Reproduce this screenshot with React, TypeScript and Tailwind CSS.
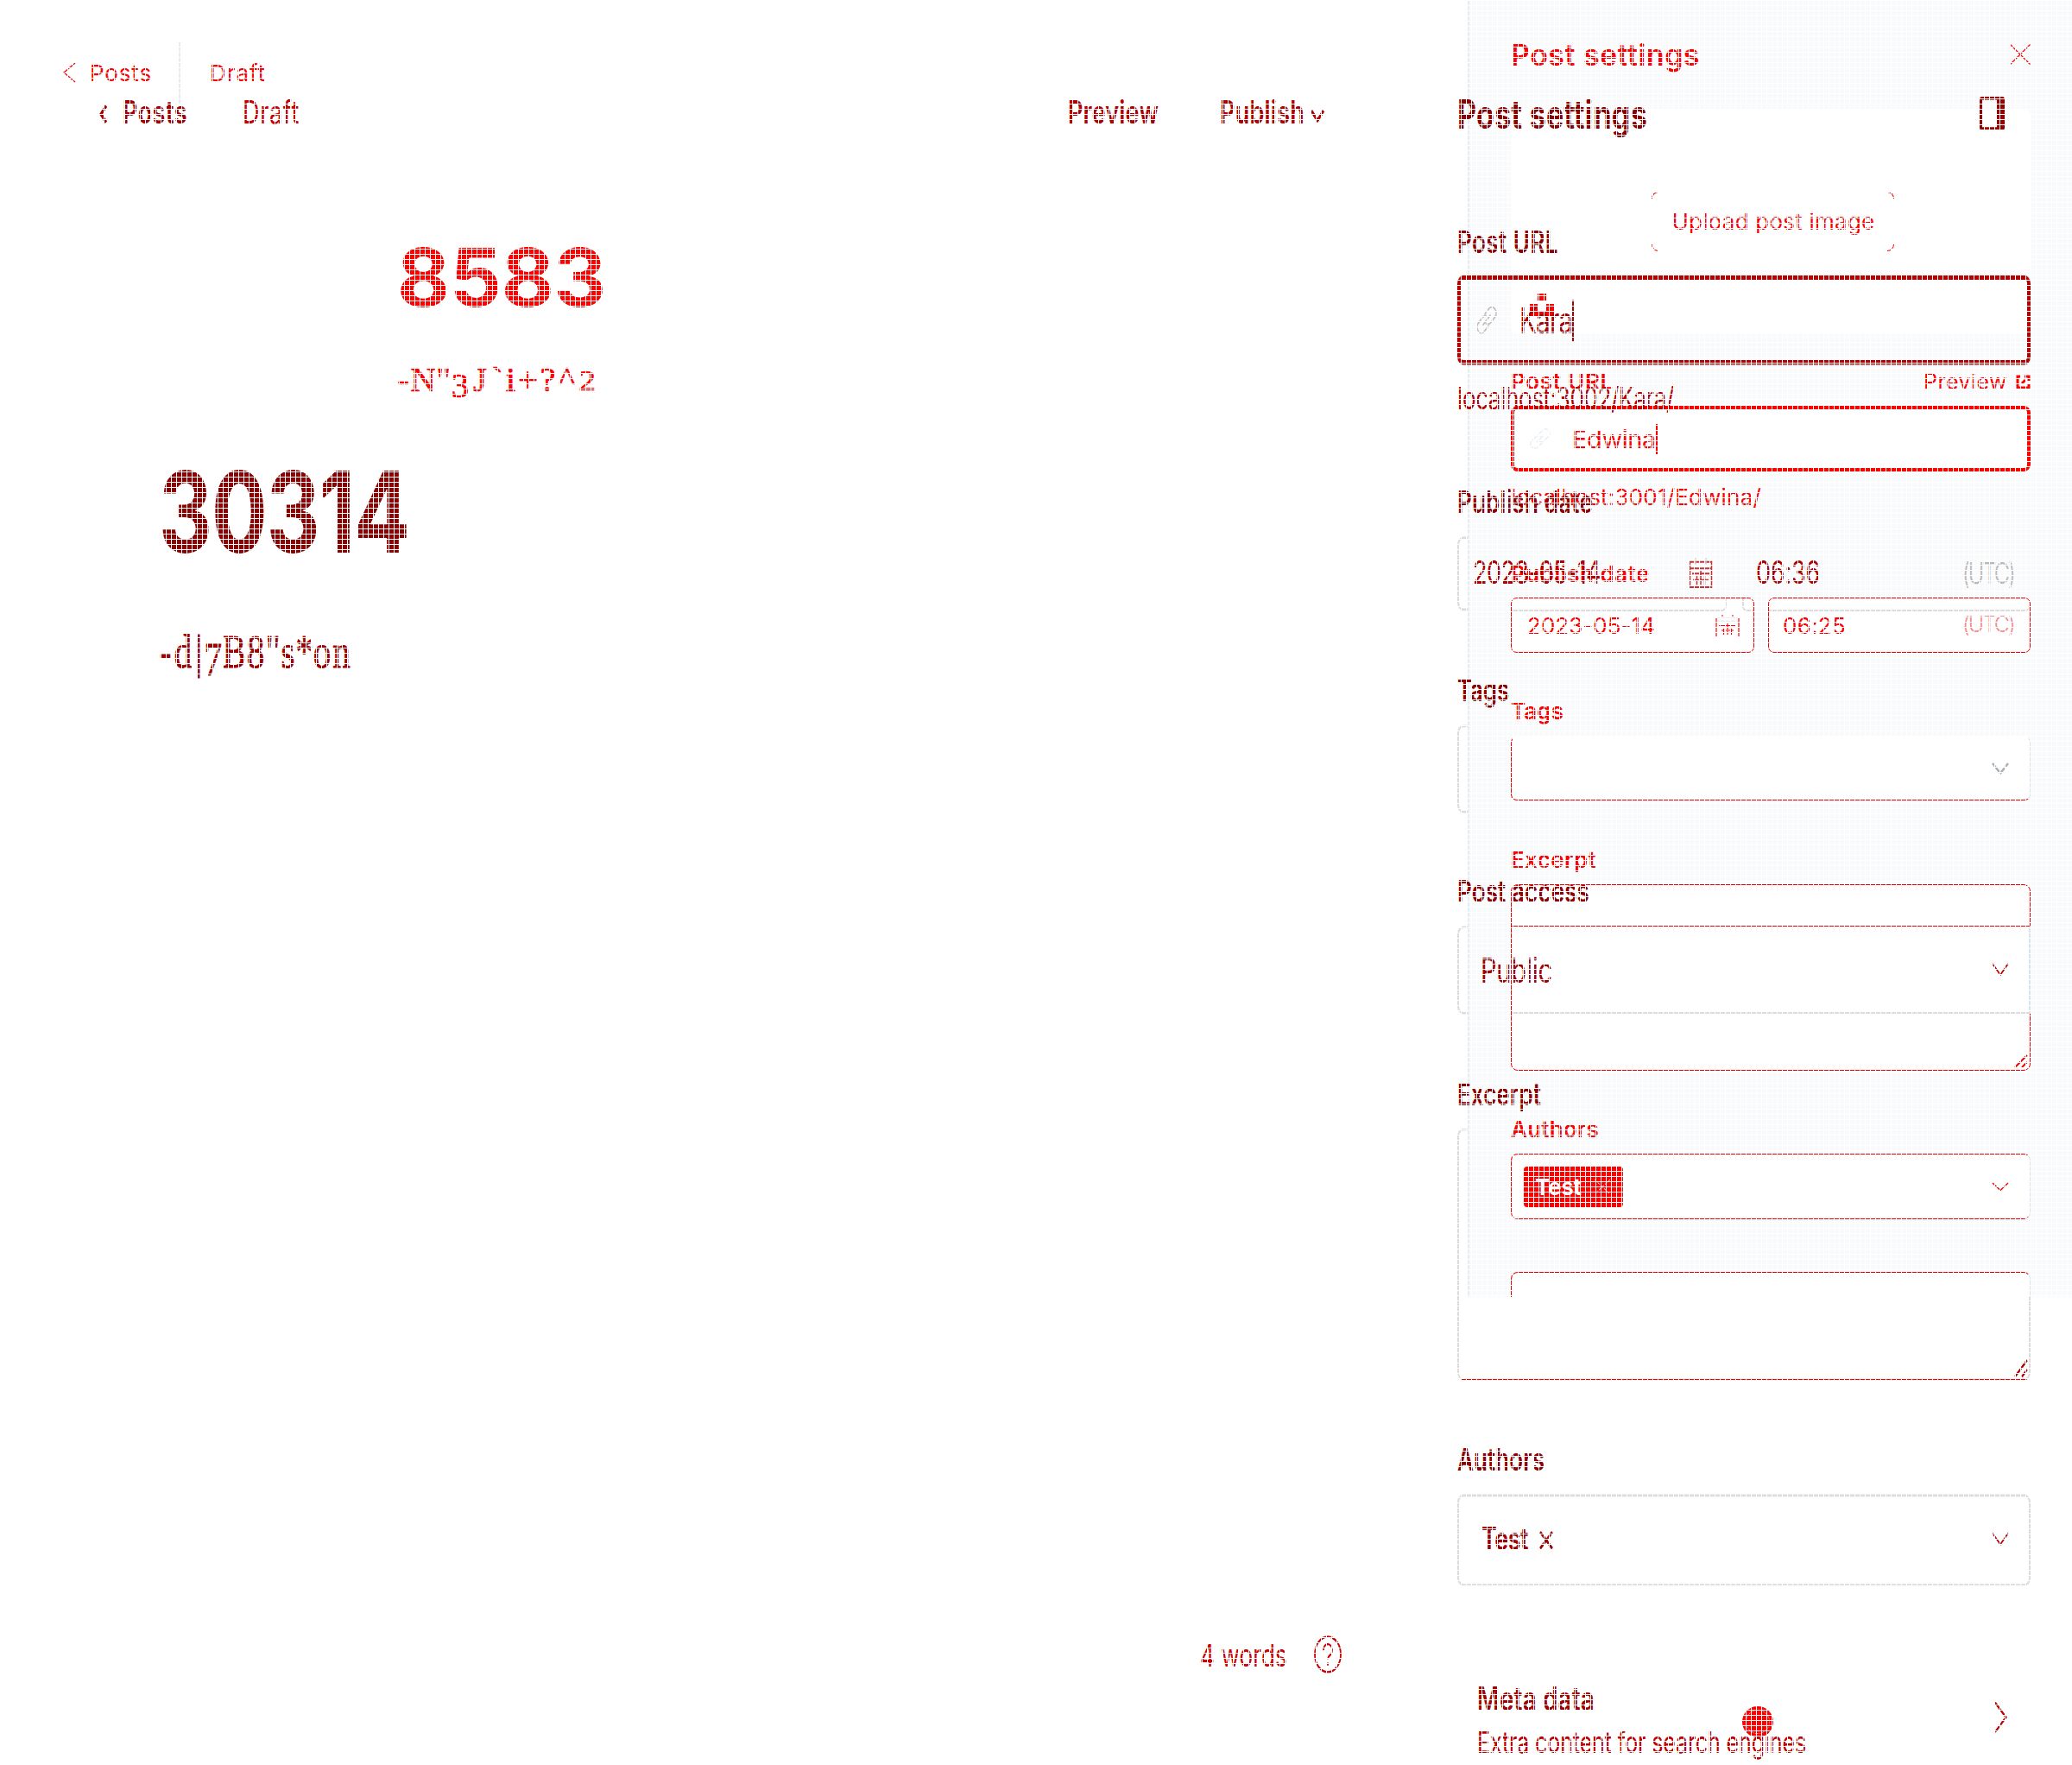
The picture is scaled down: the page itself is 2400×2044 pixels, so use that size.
import { useLayoutEffect, useRef, type ReactNode } from "react";

type FitProps = { text: string; w: number; className: string };

/** A single line of text whose tracking is spread so that it fills `w` pixels. */
function Fit({ text, w, className }: FitProps) {
  const ref = useRef<HTMLSpanElement>(null);
  useLayoutEffect(() => {
    const el = ref.current;
    if (!el) return;
    el.style.letterSpacing = "0px";
    const natural = el.getBoundingClientRect().width;
    el.style.letterSpacing = `${(w - natural) / text.length}px`;
  }, [text, w]);
  return (
    <span ref={ref} className={`inline-block shrink-0 whitespace-pre ${className}`}>
      {text}
    </span>
  );
}

type Glyph = { c: string; w: number; low?: boolean; small?: boolean };

/** Serif text with old-style figures: low digits hang below the baseline. */
function SerifLine({ glyphs, className }: { glyphs: Glyph[]; className: string }) {
  return (
    <div className={`flex h-[60px] leading-[60px] text-[41px] font-['Liberation_Serif',serif] [-webkit-text-stroke:0.7px_currentColor] ${className}`}>
      {glyphs.map((g, i) => (
        <span key={i} className="flex justify-center" style={{ width: g.w }}>
          <span className={g.low ? "relative top-[7px]" : g.small ? "relative top-[2px] scale-x-[1.2] text-[33px]" : ""}>{g.c}</span>
        </span>
      ))}
    </div>
  );
}

const lineA: Glyph[] = [
  { c: "-", w: 16 }, { c: "N", w: 30 }, { c: '"', w: 17 }, { c: "3", w: 22, low: true }, { c: "J", w: 24 },
  { c: "`", w: 16 }, { c: "i", w: 15 }, { c: "+", w: 25 }, { c: "?", w: 21 }, { c: "^", w: 23 }, { c: "2", w: 24, small: true },
];

const lineB: Glyph[] = [
  { c: "-", w: 15 }, { c: "d", w: 26 }, { c: "|", w: 10 }, { c: "7", w: 23.5, low: true }, { c: "B", w: 25.5 },
  { c: "8", w: 24 }, { c: '"', w: 16 }, { c: "s", w: 19 }, { c: "*", w: 19 }, { c: "o", w: 22 }, { c: "n", w: 23 },
];

function Chevron({ className, w = 20, h = 12, sw = 1.5 }: { className: string; w?: number; h?: number; sw?: number }) {
  return (
    <svg width={w} height={h} viewBox={`0 0 ${w} ${h}`} className={`shrink-0 ${className}`} fill="none" stroke="currentColor" strokeWidth={sw}>
      <path d={`M1 1L${w / 2} ${h - 1.5}L${w - 1} 1`} />
    </svg>
  );
}

function LinkIcon({ className }: { className: string }) {
  return (
    <svg width="26" height="26" viewBox="0 0 26 26" className={`shrink-0 ${className}`} fill="none" stroke="currentColor" strokeWidth="1.5" strokeLinecap="round">
      <path d="M9 17L17 9" />
      <path d="M11 8L16 3a5 5 0 0 1 7 7l-5 5a5 5 0 0 1-6 .8" />
      <path d="M15 18l-5 5a5 5 0 0 1-7-7l5-5a5 5 0 0 1 6-.8" />
    </svg>
  );
}

function CalendarIcon({ className }: { className: string }) {
  return (
    <svg width="28" height="26" viewBox="0 0 28 26" className={`shrink-0 ${className}`} fill="none" stroke="currentColor" strokeWidth="1.5">
      <path d="M1.5 3.500h25v21.500h-25z M1.5 9h25" />
      <path d="M8 0.500v5M20 0.500v5" stroke="#c8c8c8" />
      <path d="M4 13.500h20M5 19h18M9.500 15v8M14 11v12M18.500 15v8" />
    </svg>
  );
}

/** Faint calendar: only its sides and a few grid strokes are strong. */
function CalendarTrace({ className }: { className: string }) {
  return (
    <svg width="28" height="26" viewBox="0 0 28 26" className={`shrink-0 ${className}`} fill="none" stroke="currentColor" strokeWidth="1.2">
      <path d="M2 4h24M2 8.500h24" stroke="#ececec" strokeWidth="2" />
      <path d="M1 5v21M27 5v21" />
      <path d="M7 2h2M19 2h2M4 13.500h20M9.500 17v7M14 11v13M18.500 17v7" />
      <path d="M7 19h14" strokeDasharray="2 2" />
    </svg>
  );
}

function Grip({ className }: { className: string }) {
  return (
    <svg width="16" height="16" viewBox="0 0 16 16" className={`shrink-0 ${className}`} stroke="currentColor" strokeWidth="2">
      <path d="M1 15L15 1M9 15L15 9" />
    </svg>
  );
}

function LabelRow({ children, className }: { children: ReactNode; className: string }) {
  return <div className={`flex shrink-0 items-center justify-between ${className}`}>{children}</div>;
}

const labelA = "text-[26px] font-semibold text-[#ff0000]";
const labelB = "text-[26px] font-semibold text-[#900000]";

/** Outlines of the taller panel's fields, partly covered by the shorter panel. */
function FieldFrames() {
  return (
    <div className="col-start-1 row-start-1 flex h-[1500px] w-[2400px] origin-top scale-y-[1.36267] flex-col pl-[1688px] pt-[455.5px]">
      <div className="h-[63px] w-[312px] shrink-0 rounded-[7px] border-2 border-[#dcdcdc]" />
      <div className="mt-[97px] h-[75px] w-[664px] shrink-0 rounded-[7px] border-2 border-[#dcdcdc]" />
      <div className="mt-[96px] h-[75px] w-[664px] shrink-0 rounded-[7px] border-2 border-[#dcdcdc]" />
      <div className="mt-[97px] flex h-[214px] w-[664px] shrink-0 items-end justify-end rounded-[7px] border-2 border-b-1 border-[#dcdcdc] border-b-[#f00000] pr-px pb-px">
        <Grip className="text-[#b00000]" />
      </div>
      <div className="mt-[97px] h-[78px] w-[664px] shrink-0 rounded-[7px] border-2 border-[#dcdcdc]" />
    </div>
  );
}

function EditorA() {
  return (
    <div className="flex w-[1700px] shrink-0 flex-col text-[#ff0000]">
      <div className="flex h-[168px] items-center pl-[73px]">
        <svg width="15" height="24" viewBox="0 0 15 24" fill="none" stroke="currentColor" strokeWidth="1.4">
          <path d="M14 1L1 12L14 23" />
        </svg>
        <Fit text="Posts" w={72} className="ml-[16px] text-[26px]" />
        <div className="ml-[31px] h-[71px] w-[2px] bg-[#e5ecf2]" />
        <Fit text="Draft" w={65} className="ml-[34px] pt-[1px] text-[26px]" />
      </div>
      <div className="mt-[98px] flex h-[110px] items-center pl-[460px]">
        <Fit text="8583" w={242} className="text-[94px] leading-[110px] font-bold" />
      </div>
      <SerifLine glyphs={lineA} className="mt-[33px] pl-[459px]" />
    </div>
  );
}

function UploadButton() {
  return (
    <div className="relative mt-[96px] ml-[4px] flex h-[69px] w-[281px] items-center justify-center">
      <span className="absolute top-0 left-0 size-[8px] rounded-tl-[8px] border-t border-l border-[#ff0000]" />
      <span className="absolute top-0 right-0 size-[8px] rounded-tr-[8px] border-t border-r border-[#ff0000]" />
      <span className="absolute bottom-0 left-0 size-[8px] rounded-bl-[8px] border-b border-l border-[#ff0000]" />
      <span className="absolute right-0 bottom-0 size-[8px] rounded-br-[8px] border-r border-b border-[#ff0000]" />
      <Fit text="Upload post image" w={235} className="ml-[2px] text-[26px] font-normal" />
    </div>
  );
}

function PanelA() {
  return (
    <div className="flex h-[1502px] w-[700px] shrink-0 flex-col overflow-hidden border-l-2 border-[#e6edf3] bg-[#f9fafc] pr-[48px] pl-[48px] text-[#ff0000]">
      <div className="flex h-[126px] shrink-0 items-center justify-between">
        <Fit text="Post settings" w={219} className="text-[34px] font-semibold" />
        <svg width="24" height="24" viewBox="0 0 24 24" stroke="currentColor" strokeWidth="1.2">
          <path d="M0.500 0.500L23.500 23.500M23.500 0.500L0.500 23.500" />
        </svg>
      </div>
      <div className="flex h-[261px] shrink-0 flex-col items-center rounded-[8px] bg-white">
        <UploadButton />
        <svg width="28" height="26" viewBox="0 0 28 26" className="mt-[49px] mr-auto ml-[22px]" fill="currentColor">
          <path d="M9 0h10v8H9zM0 12h9v8h10v-8h9v14H0z" />
        </svg>
      </div>
      <LabelRow className="mt-[25px] h-[58px]">
        <Fit text="Post URL" w={119} className={labelA} />
        <div className="flex items-center pt-[3px]">
          <Fit text="Preview" w={97} className="text-[25px]" />
          <svg width="17" height="17" viewBox="0 0 17 17" className="ml-[10px]" fill="none" stroke="currentColor" strokeWidth="3">
            <path d="M6 2H2v13h13v-4M7 10l4-4M10 2h5v5" />
          </svg>
        </div>
      </LabelRow>
      <div className="flex h-[76px] shrink-0 items-center rounded-[8px] border-4 border-[#ff0000] bg-white pl-[17px]">
        <LinkIcon className="text-[#e9eef2]" />
        <Fit text="Edwina" w={97} className="ml-[24px] pt-[1px] text-[29px]" />
        <div className="h-[35px] w-[2px] bg-[#ff0000]" />
      </div>
      <LabelRow className="h-[60px] pb-[2px]">
        <Fit text="localhost:3001/Edwina/" w={290} className="text-[26px]" />
      </LabelRow>
      <LabelRow className="mt-[30px] h-[56px]">
        <Fit text="Publish date" w={161} className={labelA} />
      </LabelRow>
      <div className="flex h-[64px] shrink-0 justify-between">
        <div className="relative flex w-[282px] items-center rounded-[7px] border border-[#f00000] bg-white pl-[18px]">
          <div className="absolute top-0 left-0 h-[15px] w-[249px] rounded-br-[6px] border-r-2 border-b-2 border-[#dcdcdc]" />
          <div className="absolute top-0 right-0 h-[15px] w-[13px] rounded-bl-[6px] border-b-2 border-l-2 border-[#dcdcdc]" />
          <Fit text="2023-05-14" w={148} className="text-[26px]" />
          <CalendarTrace className="ml-[70px]" />
        </div>
        <div className="relative flex w-[304px] items-center justify-between rounded-[7px] border border-[#f00000] bg-white pr-[18px] pl-[16px]">
          <div className="absolute top-0 right-0 h-[15px] w-[302px] rounded-br-[6px] border-b-2 border-[#dcdcdc]" />
          <Fit text="06:25" w={73} className="text-[26px]" />
          <Fit text="(UTC)" w={60} className="text-[25px] font-light text-[#f58a8a]" />
        </div>
      </div>
      <LabelRow className="mt-[37px] h-[60px]">
        <Fit text="Tags" w={61} className={labelA} />
      </LabelRow>
      <div className="flex h-[74px] shrink-0 items-center justify-end rounded-[7px] border border-t-transparent border-r-[#dbe3ea] border-b-[#f00000] border-l-[#f00000] bg-white pr-[24px]">
        <Chevron className="text-[#a9b0b6]" h={14} sw={2.5} />
      </div>
      <LabelRow className="mt-[39px] h-[58px]">
        <Fit text="Excerpt" w={99} className={labelA} />
      </LabelRow>
      <div className="flex h-[216px] shrink-0 flex-col rounded-[8px] border border-[#f00000] bg-white">
        <div className="mt-[47px] -mr-px h-[102px] shrink-0 border-t border-r-2 border-b-2 border-t-[#f00000] border-r-[#dbe3ea] border-b-[#dcdcdc]" />
        <Grip className="mt-auto mr-[2px] mb-[2px] ml-auto" />
      </div>
      <LabelRow className="mt-[38px] h-[58px]">
        <Fit text="Authors" w={102} className={labelA} />
      </LabelRow>
      <div className="flex h-[76px] shrink-0 items-center justify-between rounded-[8px] border border-[#f00000] border-r-[#dbe3ea] bg-white pr-[24px] pl-[14px]">
        <div className="flex h-[47px] w-[115px] items-center rounded-[4px] bg-[#ff0000] pl-[13px] text-white">
          <Fit text="Test" w={54} className="text-[26px] font-semibold" />
          <svg width="20" height="19" viewBox="0 0 20 19" className="ml-[14px]" stroke="currentColor" strokeWidth="1" strokeDasharray="3 2">
            <path d="M1 1L19 18M19 1L1 18" />
          </svg>
        </div>
        <Chevron className="text-[#ff0000]" h={11} />
      </div>
      <div className="mt-[61px] h-[40px] shrink-0 rounded-t-[8px] border border-[#f00000] border-r-[#dbe3ea] bg-white" />
    </div>
  );
}

function EditorB() {
  return (
    <div className="flex w-[1688px] shrink-0 flex-col">
      <div className="flex h-[191px] shrink-0 items-center pt-[2px] pl-[115px]">
        <svg width="9" height="16" viewBox="0 0 9 16" fill="none" stroke="#a80000" strokeWidth="3">
          <path d="M8 1L2 8L8 15" />
        </svg>
        <Fit text="Posts" w={75} className="ml-[18px] text-[27px] font-semibold text-[#a40000]" />
        <Fit text="Draft" w={66} className="ml-[64px] text-[27px] text-[#c80000]" />
        <Fit text="Preview" w={105} className="ml-[890px] text-[27px] font-semibold text-[#b00000]" />
        <Fit text="Publish" w={98} className="ml-[71px] text-[27px] font-semibold text-[#b00000]" />
        <Chevron className="ml-[7px] mt-[4px] text-[#b00000]" w={16} h={11} sw={2.8} />
      </div>
      <div className="mt-[188.5px] flex h-[110px] shrink-0 items-center pl-[184px]">
        <Fit text="30314" w={290} className="text-[96px] leading-[110px] font-bold text-[#8b0000]" />
      </div>
      <SerifLine glyphs={lineB} className="mt-[33.5px] shrink-0 pl-[184px] text-[#a00000]" />
      <div className="mt-[793px] flex h-[60px] shrink-0 items-center pl-[1390px] text-[#cc0000]">
        <Fit text="4 words" w={101} className="text-[26px]" />
        <svg width="32" height="32" viewBox="0 0 32 32" className="ml-[31px]" fill="none" stroke="currentColor" strokeWidth="1.800">
          <circle cx="16" cy="16" r="15" />
          <path d="M11 12.500a5 5 0 1 1 7.500 4.200c-1.700 1-2.500 1.700-2.500 3.300M16 23v2.500" />
        </svg>
      </div>
    </div>
  );
}

function PanelB() {
  return (
    <div className="flex w-[664px] shrink-0 flex-col">
      <div className="flex h-[176px] shrink-0 items-center justify-between pt-[17px] pr-[30px]">
        <Fit text="Post settings" w={220} className="text-[34px] font-bold text-[#8b0000]" />
        <svg width="29" height="29" viewBox="0 0 29 29" fill="none" stroke="#960000">
          <rect x="1.500" y="1.500" width="26" height="26" rx="1.500" strokeWidth="3" />
          <path d="M24 1v27" strokeWidth="8" />
        </svg>
      </div>
      <LabelRow className="h-[58px]">
        <Fit text="Post URL" w={117} className={labelB} />
      </LabelRow>
      <div className="flex h-[76px] shrink-0 items-center rounded-[7px] border-4 border-[#b40000] pl-[17px] text-[#a80000] outline-1 outline-[#dcdcdc]/60">
        <LinkIcon className="text-[#c4bcbc]" />
        <Fit text="Kara" w={61} className="ml-[25px] text-[30px]" />
        <div className="h-[35px] w-[2px] bg-[#b00000]" />
      </div>
      <LabelRow className="h-[60px] pb-[3px]">
        <Fit text="localhost:3002/Kara/" w={251} className="text-[26px] text-[#b40000]" />
      </LabelRow>
      <LabelRow className="mt-[27px] h-[58px]">
        <Fit text="Publish date" w={157} className={labelB} />
      </LabelRow>
      <div className="flex h-[63px] shrink-0 items-center pt-[2px] pr-[19px] pl-[18px] text-[#b00000]">
        <Fit text="2023-05-14" w={148} className="text-[27px]" />
        <CalendarIcon className="mb-[2px] ml-[102px] text-[#c83030]" />
        <Fit text="06:36" w={74} className="ml-[50px] text-[27px]" />
        <Fit text="(UTC)" w={60} className="ml-auto text-[25px] font-light text-[#b8b8b8]" />
      </div>
      <LabelRow className="mt-[39px] h-[58px]">
        <Fit text="Tags" w={60} className={labelB} />
      </LabelRow>
      <LabelRow className="mt-[113px] h-[58px]">
        <Fit text="Post access" w={153} className={labelB} />
      </LabelRow>
      <div className="flex h-[75px] shrink-0 items-center justify-between pr-[25px] pl-[27px]">
        <Fit text="Public" w={83} className="pt-[2px] text-[29px] text-[#a40000]" />
        <Chevron className="text-[#c00000]" />
      </div>
      <LabelRow className="mt-[39px] h-[58px]">
        <Fit text="Excerpt" w={97} className={labelB} />
      </LabelRow>
      <LabelRow className="mt-[253px] h-[58px]">
        <Fit text="Authors" w={101} className={labelB} />
      </LabelRow>
      <div className="flex h-[78px] shrink-0 items-center pr-[25px] pl-[28px] text-[#a00000]">
        <Fit text="Test" w={54} className="text-[27px] font-semibold" />
        <svg width="16" height="16" viewBox="0 0 16 16" className="mt-[1px] ml-[13px]" stroke="currentColor" strokeWidth="2.4">
          <path d="M1 1L15 15M15 1L1 15" />
        </svg>
        <Chevron className="ml-auto text-[#c00000]" />
      </div>
      <div className="mt-[79px] flex h-[73px] shrink-0 items-center justify-between pr-[27px] pl-[23px]">
        <div className="flex flex-col items-start">
          <Fit text="Meta data" w={136} className="text-[28px] leading-[37px] font-semibold text-[#a00000]" />
          <Fit text="Extra content for search engines" w={381} className="text-[25px] leading-[36px] text-[#c00000]" />
        </div>
        <svg width="15" height="27" viewBox="0 0 15 27" className="mb-[7px]" fill="none" stroke="#c00000" strokeWidth="2">
          <path d="M1 1L13.500 13.500L1 26" />
        </svg>
      </div>
    </div>
  );
}

export default function App() {
  return (
    <div className="grid h-[2044px] w-[2400px] items-start overflow-hidden bg-white font-['Inter',sans-serif]">
      <FieldFrames />
      <div className="z-10 col-start-1 row-start-1 flex h-[2044px] w-[2400px] flex-col">
        <div className="flex">
          <EditorA />
          <PanelA />
        </div>
        <div className="mt-[474px] ml-[2018px] size-[36px] rounded-full bg-[#ff0000] p-[4px]">
          <div className="size-full rounded-full border border-dotted border-white/70" />
        </div>
      </div>
      <div className="z-20 col-start-1 row-start-1 flex h-[1500px] w-[2400px] origin-top scale-y-[1.36267]">
        <EditorB />
        <PanelB />
      </div>
      <div className="pointer-events-none z-30 col-start-1 row-start-1 h-[2044px] w-[2400px] bg-[linear-gradient(to_bottom,white_1px,transparent_1px),linear-gradient(to_right,white_1px,transparent_1px)] bg-[length:6px_6px]" />
    </div>
  );
}
